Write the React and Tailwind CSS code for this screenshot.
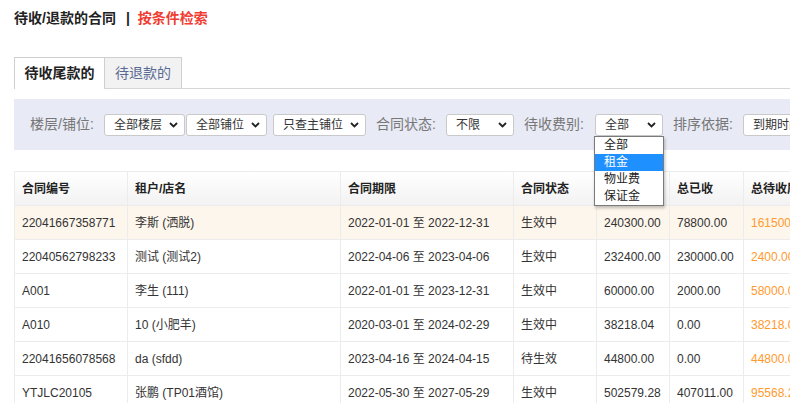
import { useState } from 'react'

const font = { fontFamily: '"Liberation Sans", "Noto Sans CJK SC", sans-serif' }

const columns = [
  { key: 'no', label: '合同编号', width: 113 },
  { key: 'tenant', label: '租户/店名', width: 213 },
  { key: 'period', label: '合同期限', width: 173 },
  { key: 'status', label: '合同状态', width: 83 },
  { key: 'total', label: '', width: 73 },
  { key: 'paid', label: '总已收', width: 74 },
  { key: 'due', label: '总待收尾款', width: 110 },
  { key: 'op', label: '操作', width: 110 },
]

const rows = [
  { no: '22041667358771', tenant: '李斯 (洒脱)', period: '2022-01-01 至 2022-12-31', status: '生效中', total: '240300.00', paid: '78800.00', due: '161500.00' },
  { no: '22040562798233', tenant: '测试 (测试2)', period: '2022-04-06 至 2023-04-06', status: '生效中', total: '232400.00', paid: '230000.00', due: '2400.00' },
  { no: 'A001', tenant: '李生 (111)', period: '2022-01-01 至 2023-12-31', status: '生效中', total: '60000.00', paid: '2000.00', due: '58000.00' },
  { no: 'A010', tenant: '10 (小肥羊)', period: '2020-03-01 至 2024-02-29', status: '生效中', total: '38218.04', paid: '0.00', due: '38218.04' },
  { no: '22041656078568', tenant: 'da (sfdd)', period: '2023-04-16 至 2024-04-15', status: '待生效', total: '44800.00', paid: '0.00', due: '44800.00' },
  { no: 'YTJLC20105', tenant: '张鹏 (TP01酒馆)', period: '2022-05-30 至 2027-05-29', status: '生效中', total: '502579.28', paid: '407011.00', due: '95568.28' },
]

function Chevron() {
  return (
    <svg width="9" height="6" viewBox="0 0 9 6" className="shrink-0">
      <path d="M1 1 L4.5 4.5 L8 1" fill="none" stroke="#222" strokeWidth="1.8" />
    </svg>
  )
}

function FakeSelect({ value, width, className = '', children }) {
  return (
    <div
      className={`relative flex h-[22px] shrink-0 items-center justify-between rounded-[3px] border border-[#c9c9c9] bg-white pl-[9px] pr-[6px] text-[12px] text-[#333] ${className}`}
      style={{ width }}
    >
      <span>{value}</span>
      <Chevron />
      {children}
    </div>
  )
}

function Label({ children, width, className = '' }) {
  return (
    <span className={`shrink-0 text-[14px] text-[#777] whitespace-nowrap ${className}`} style={{ width }}>
      {children}
    </span>
  )
}

export default function App() {
  const [tab] = useState(0)
  return (
    <div className="h-[403px] w-[790px] overflow-hidden bg-white pl-[14px]" style={font}>
      <div className="flex h-[36px] items-center text-[14px] font-bold leading-none">
        <span className="text-[#222]">待收/退款的合同</span>
        <span className="ml-[10px] mr-[8px] text-[#222]">|</span>
        <span className="text-[#f03c32]">按条件检索</span>
      </div>

      <div className="mt-[21px] flex h-[32px] items-end border-b border-[#d6d6d6]">
        <div className={`-mb-px flex h-[32px] w-[91px] items-center justify-center border border-b-0 border-[#cfcfcf] bg-white text-[14px] text-[#222] ${tab === 0 ? 'font-semibold' : ''}`}>
          待收尾款的
        </div>
        <div className="flex h-[31px] w-[77px] items-center justify-center border border-l-0 border-b-0 border-[#cfcfcf] bg-[#f2f2f2] text-[14px] text-[#5a6b93]">
          待退款的
        </div>
      </div>

      <div className="mt-[10px] flex h-[51px] w-[900px] items-center bg-[#e8eaf5] pl-[16px]">
        <Label width={74}>楼层/铺位:</Label>
        <FakeSelect value="全部楼层" width={81} />
        <FakeSelect value="全部铺位" width={81} className="ml-[1px]" />
        <FakeSelect value="只查主铺位" width={93} className="ml-[6px]" />
        <Label width={70} className="ml-[10px]">合同状态:</Label>
        <FakeSelect value="不限" width={68} />
        <Label width={71} className="ml-[10px]">待收费别:</Label>
        <FakeSelect value="全部" width={68}>
          <div className="absolute left-[-2px] top-[21px] z-10 w-[70px] border border-[#7a7a7a] bg-white shadow-[1px_2px_3px_rgba(0,0,0,0.25)]">
            {['全部', '租金', '物业费', '保证金'].map((item, i) => (
              <div
                key={item}
                className={`flex h-[17px] items-center pl-[9px] text-[12px] ${i === 1 ? 'bg-[#1e90ff] text-white' : 'text-[#222]'}`}
              >
                {item}
              </div>
            ))}
          </div>
        </FakeSelect>
        <Label width={70} className="ml-[10px]">排序依据:</Label>
        <FakeSelect value="到期时间" width={100} />
      </div>

      <table className="mt-[21px] w-[949px] table-fixed border-collapse text-[12px]">
        <colgroup>
          {columns.map((c) => (
            <col key={c.key} style={{ width: c.width }} />
          ))}
        </colgroup>
        <thead>
          <tr className="h-[34px] bg-gradient-to-b from-white to-[#f2f2f2]">
            {columns.map((c) => (
              <th key={c.key} className="border border-[#ececec] px-[7px] text-left font-bold text-[#222] whitespace-nowrap">
                {c.label}
              </th>
            ))}
          </tr>
        </thead>
        <tbody>
          {rows.map((r, i) => (
            <tr key={r.no} className={`h-[34px] ${i === 0 ? 'bg-[#fdf6ec]' : 'bg-white'}`}>
              <td className="border border-[#ececec] px-[7px] text-[#333] whitespace-nowrap">{r.no}</td>
              <td className="border border-[#ececec] px-[7px] text-[#333] whitespace-nowrap">{r.tenant}</td>
              <td className="border border-[#ececec] px-[7px] text-[#333] whitespace-nowrap">{r.period}</td>
              <td className="border border-[#ececec] px-[7px] text-[#333] whitespace-nowrap">{r.status}</td>
              <td className="border border-[#ececec] px-[7px] text-[#333] whitespace-nowrap">{r.total}</td>
              <td className="border border-[#ececec] px-[7px] text-[#333] whitespace-nowrap">{r.paid}</td>
              <td className="border border-[#ececec] px-[7px] text-[#ff9a2e] whitespace-nowrap">{r.due}</td>
              <td className="border border-[#ececec] px-[7px] text-[#333] whitespace-nowrap">查看</td>
            </tr>
          ))}
        </tbody>
      </table>
    </div>
  )
}
